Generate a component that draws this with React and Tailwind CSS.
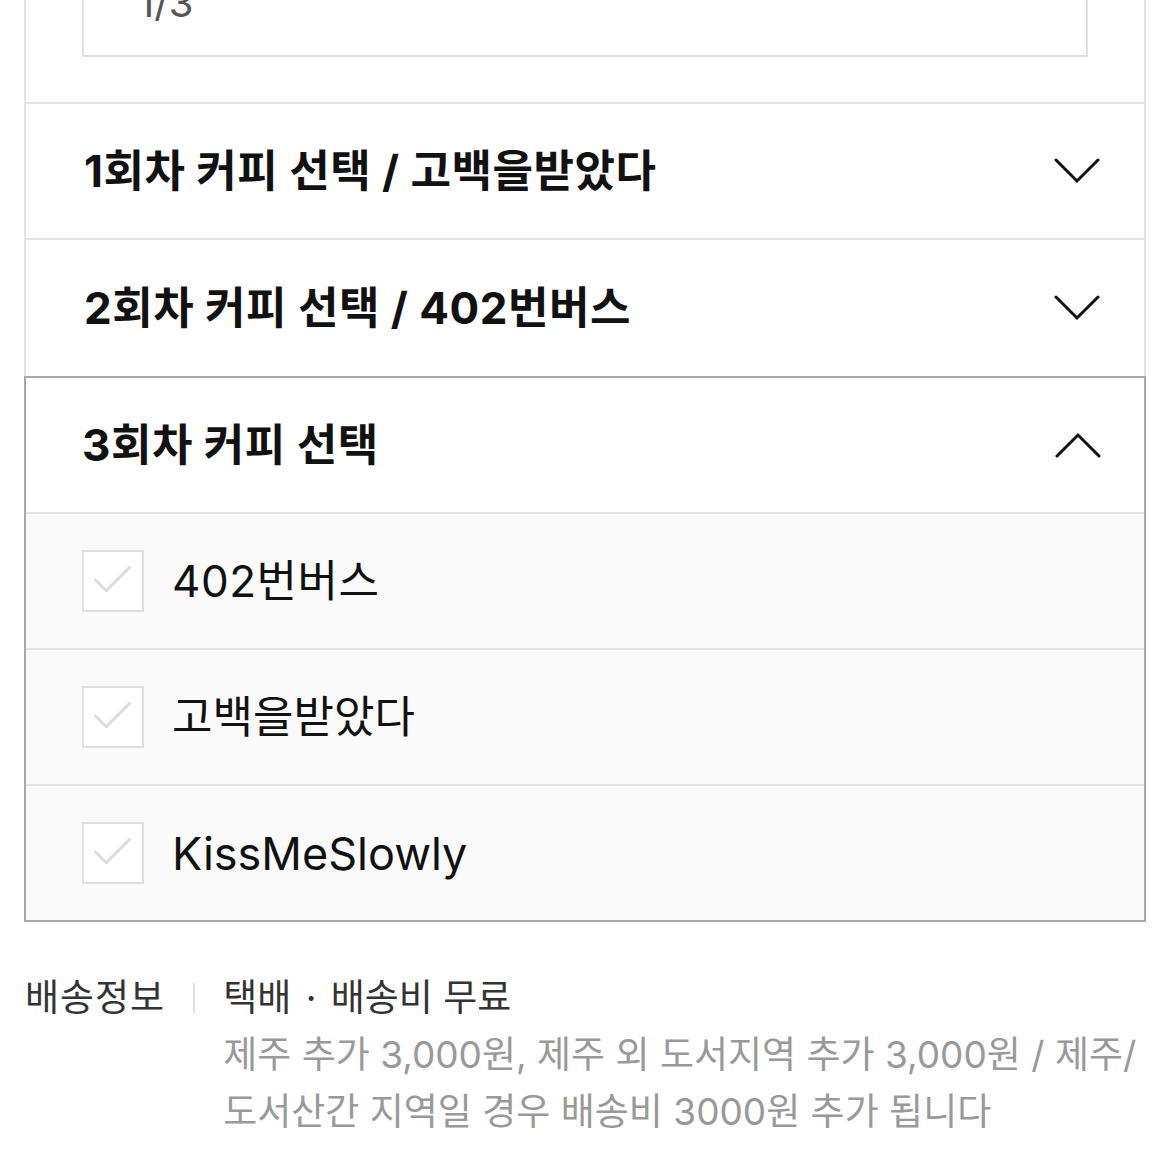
import React from "react";

const FONT = { fontFamily: 'Inter, "Noto Sans CJK KR", "Noto Sans", sans-serif' };

function Chevron({ up }) {
  return (
    <svg width="46" height="26" viewBox="0 0 46 26" fill="none" className="shrink-0">
      <path
        d={up ? "M2 24 L23 3 L44 24" : "M2 2 L23 23 L44 2"}
        stroke="#111"
        strokeWidth="3"
        strokeLinecap="round"
        strokeLinejoin="miter"
      />
    </svg>
  );
}

function Check() {
  return (
    <div className="w-[62px] h-[62px] shrink-0 border-2 border-[#dedede] bg-white flex items-center justify-center">
      <svg width="60" height="60" viewBox="0 0 60 60" fill="none">
        <path d="M12 29 L23 40 L47 16" stroke="#dcdcdc" strokeWidth="3" strokeLinecap="round" strokeLinejoin="round" />
      </svg>
    </div>
  );
}

const items = [
  { label: "402번버스", cls: "text-[44px] tracking-[0.5px]" },
  { label: "고백을받았다", cls: "text-[44px] tracking-[0px]" },
  { label: "KissMeSlowly", cls: "text-[45px] tracking-[0px]" },
];

export default function App() {
  return (
    <div className="w-[1170px] h-[1170px] overflow-hidden bg-white text-[#111]" style={FONT}>
      <div className="ml-[24px] w-[1122px]">
        {/* top section */}
        <div className="-mt-[60px] border-x-2 border-b-2 border-[#e4e4e4] px-[56px] pb-[45px]">
          <div className="h-[117px] border-2 border-[#e0e0e0] pl-[54px] pt-[37px]">
            <div className="text-[40px] leading-[48px] text-[#555]">1/3</div>
          </div>
        </div>

        {/* row 1 */}
        <div className="h-[136px] border-x-2 border-b-2 border-[#e4e4e4] flex items-center justify-between pl-[58px] pr-[44px]">
          <div className="text-[44px] font-bold tracking-[0.5px] leading-none">1회차 커피 선택 / 고백을받았다</div>
          <Chevron />
        </div>

        {/* row 2 */}
        <div className="h-[136px] border-x-2 border-[#e4e4e4] flex items-center justify-between pl-[58px] pr-[44px]">
          <div className="text-[44px] font-bold tracking-[0.5px] leading-none">2회차 커피 선택 / 402번버스</div>
          <Chevron />
        </div>

        {/* row 3 expanded */}
        <div className="border-2 border-[#a9a9a9]">
          <div className="h-[136px] border-b-2 border-[#e4e4e4] bg-white flex items-center justify-between pl-[56px] pr-[43px]">
            <div className="text-[44px] font-bold tracking-[0.5px] leading-none">3회차 커피 선택</div>
            <Chevron up />
          </div>
          {items.map((it, i) => (
            <div
              key={it.label}
              className={
                i < items.length - 1
                  ? "h-[136px] border-b-2 border-[#e4e4e4] bg-[#fafafa] flex items-center pl-[56px] gap-[28px]"
                  : "h-[134px] bg-[#fafafa] flex items-center pl-[56px] gap-[28px]"
              }
            >
              <Check />
              <div className={"leading-none text-[#111] " + it.cls}>{it.label}</div>
            </div>
          ))}
        </div>

        {/* shipping info */}
        <div className="mt-[47px] flex items-start text-[37px] leading-[57px] tracking-[0px]">
          <div className="pl-[1px] text-[#333] whitespace-nowrap tracking-[1px]">배송정보</div>
          <div className="ml-[28px] mr-[28px] mt-[14px] w-[2px] h-[30px] bg-[#e2e2e2] shrink-0" />
          <div className="flex flex-col">
            <div className="text-[#333] whitespace-nowrap">
              택배 <span className="mx-[4px]">·</span> 배송비 무료
            </div>
            <div className="text-[#999] whitespace-nowrap">제주 추가 3,000원, 제주 외 도서지역 추가 3,000원 / 제주/</div>
            <div className="text-[#999] whitespace-nowrap">도서산간 지역일 경우 배송비 3000원 추가 됩니다</div>
          </div>
        </div>
      </div>
    </div>
  );
}
